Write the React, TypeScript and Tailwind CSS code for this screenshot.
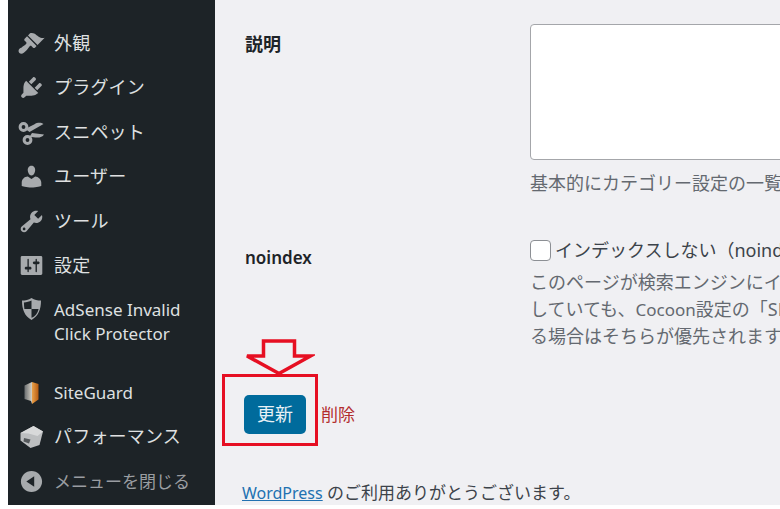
const jp = "font-['Noto_Sans','Noto_Sans_CJK_JP',sans-serif]";

type IconProps = { className?: string };

const Dash = ({ d, className = "" }: { d: string; className?: string }) => (
  <svg viewBox="0 0 20 20" className={`h-[27px] w-[27px] shrink-0 fill-[#a7aaad] ${className}`}>
    <path d={d} />
  </svg>
);

const Scissors = ({ className = "" }: IconProps) => (
  <svg viewBox="0 0 27 27" className={`h-[27px] w-[27px] shrink-0 ${className}`}>
    <circle cx="5.500" cy="8" r="3.400" fill="none" stroke="#a7aaad" strokeWidth="3" />
    <circle cx="9.500" cy="21" r="3.400" fill="none" stroke="#a7aaad" strokeWidth="3" />
    <path d="M8 10.500l3.500 2.500L25.500 5c-2.500-1.800-6.500-1.300-9 .2L10 8.500zM11 18.500l3-4.500 12 1.500c-1.500 2.800-5.500 3.500-8.500 2.900l-4-.3z" fill="#a7aaad" />
  </svg>
);

const Shield = ({ className = "" }: IconProps) => (
  <svg viewBox="0 0 27 27" className={`h-[27px] w-[27px] shrink-0 ${className}`}>
    <path d="M13.500 3c3 1.800 6 2.600 9.500 2.600 0 9-2.500 15.500-9.500 19.400C6.500 21.100 4 14.600 4 5.600 7.500 5.600 10.500 4.800 13.500 3z" fill="#a7aaad" />
    <path d="M13.500 5.500v8.500H6.400c-.3-1.900-.4-4-.5-6.500 2.900-.2 5.300-.8 7.600-2zM13.500 14h7.100c-1 4.300-3.300 7.600-7.100 8.700z" fill="#1d2327" />
  </svg>
);

const Door = ({ className = "" }: IconProps) => (
  <svg viewBox="0 0 27 27" className={`h-[27px] w-[27px] shrink-0 ${className}`}>
    <defs>
      <linearGradient id="door" x1="0" x2="1" y1="0" y2="0">
        <stop offset="0" stopColor="#6a6e70" />
        <stop offset="0.5" stopColor="#cfcac0" />
        <stop offset="0.55" stopColor="#e8a04a" />
        <stop offset="1" stopColor="#b85c12" />
      </linearGradient>
    </defs>
    <path d="M6.500 6.500L14 3l6.500 2v15.500L14 25l-1-3-6.500-2z" fill="url(#door)" />
  </svg>
);

const Cube = ({ className = "" }: IconProps) => (
  <svg viewBox="0 0 27 27" className={`h-[27px] w-[27px] shrink-0 ${className}`}>
    <path d="M2.500 10L15.500 3l9.500 5.500-3.500 13.500-9 3-10-7.500z" fill="#bcbec0" />
    <path d="M15.500 3L25 8.500l-5.500 4.500-9-2.500L2.500 10z" fill="#d8d9da" />
    <path d="M6 15l6.500 1.500-1.500 4-5.500-2z" fill="#55595c" />
  </svg>
);

const icons = {
  brush: "M14.480 11.060L7.410 3.990l1.500-1.500c.5-.56 2.300-.47 3.510.32 1.210.8 1.430 1.280 2.910 2.100 1.180.64 2.450 1.260 4.450.85zm-.71.71L6.700 4.700 4.930 6.470c-.39.39-.39 1.020 0 1.410l1.060 1.060c.39.39.39 1.030 0 1.420-.6.6-1.430 1.110-2.210 1.690-.35.26-.7.53-1.010.84C1.430 13.230.4 14.220.4 15.540c0 .6.21 1.100.6 1.490s.89.6 1.490.6c1.320 0 2.310-1.030 3.650-2.370.31-.31.58-.66.84-1.010.58-.78 1.090-1.610 1.690-2.210.39-.39 1.030-.39 1.420 0l1.060 1.060c.39.39 1.020.39 1.410 0z",
  plug: "M13.110 4.360L9.870 7.600 8 5.730l3.240-3.240c.35-.34 1.050-.2 1.560.32.52.51.66 1.210.31 1.550zm-8 1.770l.91-1.120 9.010 9.010-1.190.84c-.71.71-2.630 1.160-3.820 1.160H6.140L4.900 17.260c-.59.59-1.540.59-2.120 0-.59-.58-.59-1.530 0-2.120l1.240-1.240v-3.880c0-1.130.4-3.190 1.090-3.890zm7.260 3.970l3.240-3.240c.34-.35 1.040-.21 1.550.31.52.51.66 1.210.31 1.550l-3.240 3.250z",
  user: "M10 9.250c-2.270 0-2.730-3.440-2.730-3.440C7 4.020 7.820 2 9.970 2c2.160 0 2.980 2.020 2.710 3.810 0 0-.41 3.440-2.680 3.440zm0 2.570L12.720 10c2.390 0 4.520 2.330 4.520 4.530v2.490s-3.650 1.130-7.240 1.130c-3.650 0-7.240-1.130-7.240-1.130v-2.490c0-2.250 1.940-4.480 4.470-4.480z",
  wrench: "M16.680 9.770c-1.340 1.340-3.300 1.670-4.950.99l-5.410 6.520c-.99.99-2.590.99-3.580 0s-.99-2.590 0-3.570l6.520-5.420c-.68-1.650-.35-3.610.99-4.950 1.280-1.280 3.120-1.620 4.720-1.060l-2.890 2.890 2.820 2.820 2.860-2.870c.53 1.580.18 3.390-1.080 4.670zM3.810 16.210c.4.39 1.040.39 1.430 0 .4-.4.4-1.040 0-1.430-.39-.4-1.030-.4-1.430 0-.39.39-.39 1.030 0 1.430z",
  sliders: "M18 16V4c0-.55-.45-1-1-1H3c-.55 0-1 .45-1 1v12c0 .55.45 1 1 1h14c.55 0 1-.45 1-1zM8 11h1c.55 0 1 .45 1 1s-.45 1-1 1H8v1.500c0 .28-.22.5-.5.5s-.5-.22-.5-.5V13H6c-.55 0-1-.45-1-1s.45-1 1-1h1V5.500c0-.28.22-.5.5-.5s.5.22.5.5V11zm5-2h-1c-.55 0-1-.45-1-1s.45-1 1-1h1V5.500c0-.28.22-.5.5-.5s.5.22.5.5V7h1c.55 0 1 .45 1 1s-.45 1-1 1h-1v5.500c0 .28-.22.5-.5.5s-.5-.22-.5-.5V9z",
  collapse: "M10 2.160c4.330 0 7.840 3.510 7.840 7.840s-3.510 7.840-7.840 7.840S2.160 14.330 2.160 10 5.710 2.160 10 2.160zm2 11.720V6.120L6.180 9.970z",
};

function MenuItem({ icon, children, dim = false, small = false }: { icon: React.ReactNode; children: React.ReactNode; dim?: boolean; small?: boolean }) {
  return (
    <div className={`flex h-[44.500px] items-center gap-[9.500px] pl-[9.500px] ${small ? "text-[17px]" : "text-[18px] tracking-[0.2px]"} ${dim ? "text-[#9a9da1]" : "text-[#dfe0e1]"}`}>
      {icon}
      <span className="whitespace-nowrap">{children}</span>
    </div>
  );
}

export default function App() {
  return (
    <div className={`h-[509px] w-[780px] overflow-hidden bg-white ${jp}`}>
      <div className="relative flex h-[505px]">
        <aside className="ml-2 flex w-[207px] shrink-0 flex-col bg-[#1d2327] pt-[21px]">
          <MenuItem icon={<Dash d={icons.brush} />}>外観</MenuItem>
          <MenuItem icon={<Dash d={icons.plug} />}>プラグイン</MenuItem>
          <MenuItem icon={<Scissors />}>スニペット</MenuItem>
          <MenuItem icon={<Dash d={icons.user} />}>ユーザー</MenuItem>
          <MenuItem icon={<Dash d={icons.wrench} />}>ツール</MenuItem>
          <MenuItem icon={<Dash d={icons.sliders} />}>設定</MenuItem>
          <div className="flex items-start gap-[9.500px] pl-[9.500px] pt-[10px] text-[17px] leading-[24px] text-[#dfe0e1]">
            <Shield className="-mt-[3px]" />
            <span>
              AdSense Invalid
              <br />
              Click Protector
            </span>
          </div>
          <div className="mt-[24px]">
            <MenuItem small icon={<Door />}>SiteGuard</MenuItem>
            <MenuItem icon={<Cube />}>パフォーマンス</MenuItem>
            <MenuItem dim small icon={<Dash d={icons.collapse} />}>メニューを閉じる</MenuItem>
          </div>
        </aside>

        <main className="flex min-w-0 flex-1 flex-col overflow-hidden bg-[#f0f0f3] text-[18px] text-[#3c434a]">
          <section className="flex pl-[30px] pt-6">
            <div className="w-[285px] shrink-0 pt-[7px] font-semibold text-[#1d2327]">説明</div>
            <div className="min-w-0 flex-1">
              <div className="h-[136px] w-[300px] rounded-[4px] border border-[#a4a6aa] bg-white" />
              <p className="mt-[10px] whitespace-nowrap text-[#646970]">基本的にカテゴリー設定の一覧ページに表示されます。</p>
            </div>
          </section>

          <section className="mt-[40px] flex pl-[30px]">
            <div className="w-[285px] shrink-0 pt-[8px] text-[17px] font-semibold text-[#1d2327]">noindex</div>
            <div className="min-w-0 flex-1 whitespace-nowrap">
              <label className="flex items-center gap-[4px]">
                <span className="h-[21px] w-[21px] shrink-0 rounded-[4px] border border-[#8c8f94] bg-white" />
                <span>インデックスしない（noindex）</span>
              </label>
              <p className="mt-[5px] leading-[27px] text-[#646970]">
                このページが検索エンジンにインデックスされないようにします。
                <br />
                していても、<span className="text-[17px]">Cocoon</span>設定の「SEO」タブで設定している場合
                <br />
                る場合はそちらが優先されます。
              </p>
            </div>
          </section>

          <div className="mt-[45px] flex items-center pl-[29px]">
            <button className="h-[39px] w-[62px] rounded-[5px] bg-[#006b9c] text-[18px] text-[#e8f1f6]">更新</button>
            <a className="ml-[15px] mt-[1px] text-[17px] text-[#b32d2e]">削除</a>
          </div>

          <p className="mt-[46px] whitespace-nowrap pl-[27px] text-[17px]">
            <a className="text-[16px] text-[#2271b1] underline">WordPress</a> のご利用ありがとうございます。
          </p>
        </main>

        <div className="absolute left-[222px] top-[374px] h-[72px] w-[96px] border-[3.500px] border-[#e60f22]" />
        <svg viewBox="0 0 70 38" className="absolute left-[245px] top-[338px] h-[38px] w-[70px]">
          <path d="M18.500 3h31v15h16L34 35.500 2 18h16.500z" fill="none" stroke="#e60f22" strokeWidth="3.500" />
        </svg>
      </div>
    </div>
  );
}
